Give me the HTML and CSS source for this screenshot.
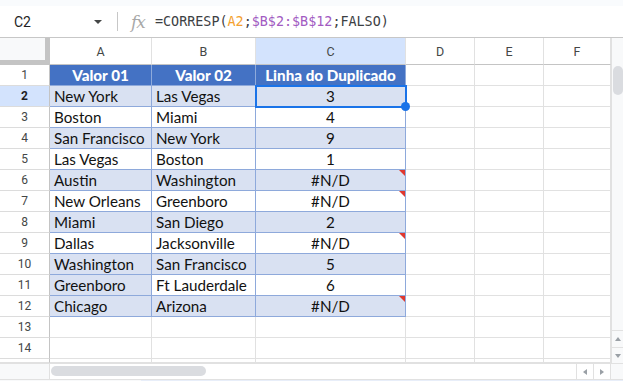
FILE: index.html
```html
<!DOCTYPE html>
<html lang="pt">
<head>
<meta charset="utf-8">
<title>CORRESP</title>
<link rel="stylesheet" href="styles.css">
</head>
<body>
<div class="app">
  <div class="topstrip"></div>
  <div class="fbar">
    <div class="namebox">C2</div>
    <div class="dd"></div>
    <div class="sep"></div>
    <div class="fx">fx</div>
    <div class="formula">=CORRESP(<span class="ref1">A2</span>;<span class="ref2">$B$2:$B$12</span>;FALSO)</div>
  </div>
  <div class="sheet">
    <div class="grid">
      <div class="corner"></div>
      <div class="ch">A</div><div class="ch">B</div><div class="ch sel">C</div><div class="ch">D</div><div class="ch">E</div><div class="ch">F</div>

      <div class="rh">1</div>
      <div class="c th">Valor 01</div><div class="c th">Valor 02</div><div class="c th">Linha do Duplicado</div><div class="e"></div><div class="e"></div><div class="e"></div>

      <div class="rh rsel">2</div>
      <div class="c b">New York</div><div class="c b">Las Vegas</div><div class="c b n cur">3<span class="handle"></span></div><div class="e"></div><div class="e"></div><div class="e"></div>

      <div class="rh">3</div>
      <div class="c">Boston</div><div class="c">Miami</div><div class="c n">4</div><div class="e"></div><div class="e"></div><div class="e"></div>

      <div class="rh">4</div>
      <div class="c b">San Francisco</div><div class="c b">New York</div><div class="c b n">9</div><div class="e"></div><div class="e"></div><div class="e"></div>

      <div class="rh">5</div>
      <div class="c">Las Vegas</div><div class="c">Boston</div><div class="c n">1</div><div class="e"></div><div class="e"></div><div class="e"></div>

      <div class="rh">6</div>
      <div class="c b">Austin</div><div class="c b">Washington</div><div class="c b n err">#N/D</div><div class="e"></div><div class="e"></div><div class="e"></div>

      <div class="rh">7</div>
      <div class="c">New Orleans</div><div class="c">Greenboro</div><div class="c n err">#N/D</div><div class="e"></div><div class="e"></div><div class="e"></div>

      <div class="rh">8</div>
      <div class="c b">Miami</div><div class="c b">San Diego</div><div class="c b n">2</div><div class="e"></div><div class="e"></div><div class="e"></div>

      <div class="rh">9</div>
      <div class="c">Dallas</div><div class="c">Jacksonville</div><div class="c n err">#N/D</div><div class="e"></div><div class="e"></div><div class="e"></div>

      <div class="rh">10</div>
      <div class="c b">Washington</div><div class="c b">San Francisco</div><div class="c b n">5</div><div class="e"></div><div class="e"></div><div class="e"></div>

      <div class="rh">11</div>
      <div class="c b">Greenboro</div><div class="c">Ft Lauderdale</div><div class="c n">6</div><div class="e"></div><div class="e"></div><div class="e"></div>

      <div class="rh">12</div>
      <div class="c b">Chicago</div><div class="c b">Arizona</div><div class="c b n err">#N/D</div><div class="e"></div><div class="e"></div><div class="e"></div>

      <div class="rh">13</div>
      <div class="e"></div><div class="e"></div><div class="e"></div><div class="e"></div><div class="e"></div><div class="e"></div>

      <div class="rh">14</div>
      <div class="e"></div><div class="e"></div><div class="e"></div><div class="e"></div><div class="e"></div><div class="e"></div>

      <div class="rh part"></div>
      <div class="e part"></div><div class="e part"></div><div class="e part"></div><div class="e part"></div><div class="e part"></div><div class="e part"></div>
    </div>
    <div class="vscroll">
      <div class="vthumb"></div>
      <div class="vspace"></div>
      <div class="vbtn"><span class="tri up"></span></div>
      <div class="vbtn"><span class="tri down"></span></div>
    </div>
  </div>
  <div class="hscroll">
    <div class="hleft"></div>
    <div class="htrack"><div class="hthumb"></div></div>
    <div class="hbtn"><span class="tri left"></span></div>
    <div class="hbtn"><span class="tri right"></span></div>
    <div class="hcorner"></div>
  </div>
  <div class="bottomstrip"><div class="bs-left"></div><div class="bs-right"></div></div>
</div>
</body>
</html>
```

FILE: styles.css
```css
* { box-sizing: border-box; }
html, body { margin: 0; padding: 0; background: #fff; }
body { font-family: Roboto, "Noto Sans", sans-serif; width: 623px; height: 381px; overflow: hidden; }

.app { display: flex; flex-direction: column; width: 623px; height: 381px; }

.topstrip { height: 6px; background: #f9fbfd; flex: none; }

.fbar {
  height: 32px; flex: none; display: flex; align-items: center;
  border-bottom: 1px solid #c7c7c7; background: #fff;
}
.namebox { width: 80px; padding-left: 14px; font-size: 14px; color: #1f1f1f; }
.dd {
  width: 0; height: 0; margin-left: 14px;
  border-left: 4.5px solid transparent; border-right: 4.5px solid transparent;
  border-top: 4.5px solid #444746;
}
.sep { width: 1px; height: 19px; background: #c7c7c7; margin-left: 15px; }
.fx {
  margin-left: 13px; width: 26px; font-family: "DejaVu Serif", serif; font-style: italic;
  font-size: 17px; color: #a8a8a8; letter-spacing: -1px;
}
.formula {
  font-family: "DejaVu Sans Mono", monospace; font-size: 13.4px; color: #3c4043;
  margin-left: -2px;
}
.ref1 { color: #f4a12f; }
.ref2 { color: #a25bc2; }

.sheet { display: flex; height: 325px; flex: none; }
.grid {
  width: 611px; display: grid;
  grid-template-columns: 50px 102px 104px 150px 69px 69px 67px;
  grid-template-rows: 27px repeat(14, 21px) 4px;
}
.grid > div { border-right: 1px solid #e1e1e1; border-bottom: 1px solid #e1e1e1; position: relative; }

.corner {
  background: #f8f9fa; border-right: 5px solid #c4c4c4 !important; border-bottom: 5px solid #c4c4c4 !important;
}
.ch {
  display: flex; align-items: center; justify-content: center;
  font-size: 12.5px; color: #444746; border-bottom-color: #c4c4c4 !important; padding-top: 1px;
}
.ch.sel { background: #d3e3fd; }
.rh {
  display: flex; align-items: center; justify-content: center;
  font-size: 12px; color: #444746; border-right-color: #c4c4c4 !important; border-bottom-color: #dcdcdc !important;
}
.rh.rsel { background: #d3e3fd; font-weight: 700; color: #1f1f1f; }

.c {
  font-family: Lato, "Noto Sans", sans-serif; font-size: 15.2px; color: #111;
  display: flex; align-items: center; padding-left: 4px; white-space: nowrap;
  border-right-color: #8ea9db !important; border-bottom-color: #8ea9db !important;
}
.c.th {
  background: #4472c4; color: #fff; font-weight: 900; justify-content: center; padding-left: 0;
  border-right-color: #8eaadb !important; border-bottom-color: #8ea9db !important;
}
.c.b { background: #d9e1f2; }
.c.n { justify-content: center; padding-left: 0; }
.c.err::after {
  content: ""; position: absolute; top: 0; right: 0; width: 0; height: 0;
  border-top: 6px solid #e0382e; border-left: 6px solid transparent;
}
.cur { outline: 2px solid #1a73e8; outline-offset: -1px; z-index: 2; }
.cur .handle {
  position: absolute; right: -5px; bottom: -5px; width: 9px; height: 9px; border-radius: 50%;
  background: #1a73e8;
}
.grid > .part { border-bottom-color: #e1e1e1 !important; }

.vscroll {
  width: 12px; display: flex; flex-direction: column; background: #f8f9fa;
  border-left: 1px solid #e1e1e1;
}
.vthumb { margin-top: 28px; height: 29px; margin-left: 1px; margin-right: 0; border-radius: 6px; background: #dadce0; }
.vspace { flex: 1; }
.vbtn {
  height: 17px; border-top: 1px solid #e1e1e1; display: flex; align-items: center; justify-content: center;
}
.vbtn:last-child { height: 16px; }
.tri { width: 0; height: 0; display: block; }
.tri.up { border-left: 3.5px solid transparent; border-right: 3.5px solid transparent; border-bottom: 4px solid #9aa0a6; }
.tri.down { border-left: 3.5px solid transparent; border-right: 3.5px solid transparent; border-top: 4px solid #9aa0a6; }
.tri.left { border-top: 3.5px solid transparent; border-bottom: 3.5px solid transparent; border-right: 4px solid #9aa0a6; }
.tri.right { border-top: 3.5px solid transparent; border-bottom: 3.5px solid transparent; border-left: 4px solid #9aa0a6; }

.hscroll { display: flex; height: 16px; flex: none; border-top: 1px solid #e1e1e1; }
.hleft { width: 50px; background: #f8f9fa; border-right: 1px solid #e1e1e1; }
.htrack { flex: 1; padding: 2px 0 0 1px; }
.hthumb { width: 155px; height: 10px; border-radius: 5px; background: #dadce0; }
.hbtn { width: 17px; border-left: 1px solid #e1e1e1; display: flex; align-items: center; justify-content: center; }
.hcorner { width: 13px; border-left: 1px solid #e1e1e1; background: #f8f9fa; }

.bottomstrip { flex: 1; display: flex; border-top: 1px solid #e1e1e1; }
.bs-left { width: 141px; background: #f8f9fa; }
.bs-right { flex: 1; background: #e8eef9; }
```
